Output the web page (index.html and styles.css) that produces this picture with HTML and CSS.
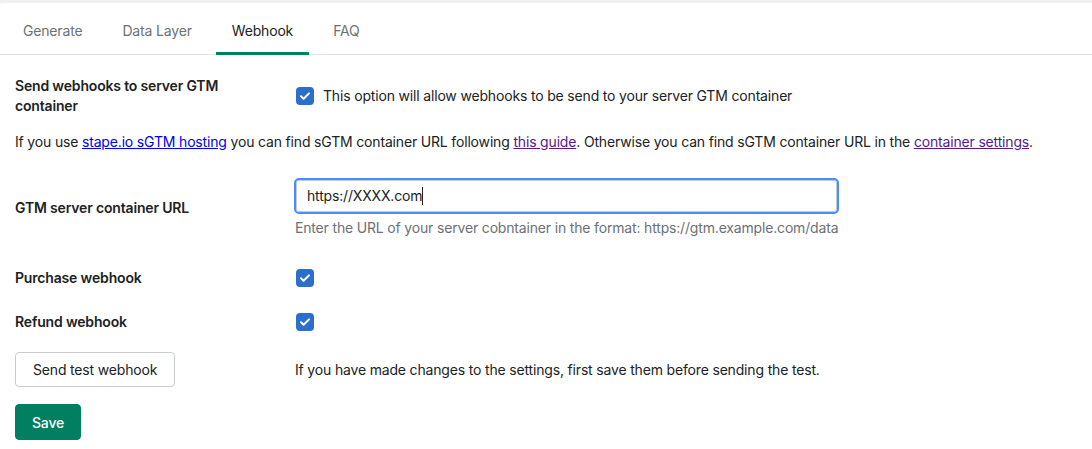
FILE: index.html
```html
<!DOCTYPE html>
<html lang="en">
<head>
    <meta charset="UTF-8">
    <meta name="viewport" content="width=device-width, initial-scale=1.0">
    <title>Webhook settings</title>
    <link rel="stylesheet" href="styles.css">
</head>
<body>
    <div class="panel">
        <div class="tabs">
            <div class="tab">Generate</div>
            <div class="tab">Data Layer</div>
            <div class="tab active">Webhook</div>
            <div class="tab">FAQ</div>
        </div>

        <div class="content">
            <div class="row row-send">
                <div class="label">Send webhooks to server GTM container</div>
                <div class="field check-line">
                    <span class="check"><svg viewBox="0 0 18 18" width="18" height="18"><path d="M5 9.3l2.6 2.5L13 6.4" fill="none" stroke="#fff" stroke-width="2" stroke-linecap="round" stroke-linejoin="round"/></svg></span>
                    <span>This option will allow webhooks to be send to your server GTM container</span>
                </div>
            </div>

            <p class="info">If you use <a href="#" class="new">stape.io sGTM hosting</a> you can find sGTM container URL following <a href="#">this guide</a>. Otherwise you can find sGTM container URL in the <a href="#">container settings</a>.</p>

            <div class="row row-url">
                <div class="label">GTM server container URL</div>
                <div class="field">
                    <div class="input">https://XXXX.com<span class="caret"></span></div>
                    <div class="help">Enter the URL of your server cobntainer in the format: https://gtm.example.com/data</div>
                </div>
            </div>

            <div class="row row-purchase">
                <div class="label">Purchase webhook</div>
                <div class="field check-line">
                    <span class="check"><svg viewBox="0 0 18 18" width="18" height="18"><path d="M5 9.3l2.6 2.5L13 6.4" fill="none" stroke="#fff" stroke-width="2" stroke-linecap="round" stroke-linejoin="round"/></svg></span>
                </div>
            </div>

            <div class="row row-refund">
                <div class="label">Refund webhook</div>
                <div class="field check-line">
                    <span class="check"><svg viewBox="0 0 18 18" width="18" height="18"><path d="M5 9.3l2.6 2.5L13 6.4" fill="none" stroke="#fff" stroke-width="2" stroke-linecap="round" stroke-linejoin="round"/></svg></span>
                </div>
            </div>

            <div class="row row-test">
                <div><button class="btn">Send test webhook</button></div>
                <div class="field">If you have made changes to the settings, first save them before sending the test.</div>
            </div>

            <button class="btn btn-primary">Save</button>
        </div>
    </div>
</body>
</html>
```

FILE: styles.css
```css
body{margin: 0; background: #f1f1f1; font-family: Inter, "Noto Sans", sans-serif; font-size: 14px; letter-spacing: -0.17px; color: #202223;}
.panel{margin-top: 3px; background: #fff; height: 446px; border-top-left-radius: 2px;}

.tabs{display: flex; gap: 8px; padding-left: 7px; border-bottom: 1px solid #e1e3e5;}
.tab{padding: 0 16px; margin-bottom: -1px; border-bottom: 3px solid transparent; height: 49px; line-height: 55px; color: #6d7175;}
.tab.active{color: #202223; border-bottom-color: #008060;}

.content{padding: 21px 15px 0;}
.row{display: grid; grid-template-columns: 280px 1fr; align-items: center;}
.label{font-weight: 600; line-height: 20px; padding-right: 30px;}
.field{line-height: 20px;}

.check-line{display: flex; align-items: center; gap: 9px; padding-left: 1px;}
.check{display: inline-flex; width: 18px; height: 18px; background: #2c6ecb; border-radius: 4px;}

.info{margin: 16px 0 0; line-height: 20px;}
.info a{color: #551a8b;}
.info a.new{color: #0000ee;}

.row-url{margin-top: 26px;}
.input{margin-left: -1px; height: 32px; line-height: 32px; border: 2px solid #458fff; border-radius: 5px; padding-left: 11px; box-shadow: inset 0 0 0 1px #c9cccf; width: 530px;}
.caret{display: inline-block; width: 1px; height: 18px; background: #202223; vertical-align: -4px;}
.help{color: #6d7175; margin-top: 4px;}

.row-purchase{margin-top: 30px;}
.row-refund{margin-top: 24px;}
.row-test{margin-top: 20px;}

.btn{font-family: inherit; font-size: 14px; letter-spacing: inherit; color: #202223; background: #fff; border: 1px solid #c9cccf; border-radius: 4px; height: 35px; padding: 0 17px; cursor: pointer;}
.btn-primary{margin-top: 17px; height: 36px; padding: 0 16px; background: #008060; border-color: #008060; color: #fff; font-weight: 500;}
```
